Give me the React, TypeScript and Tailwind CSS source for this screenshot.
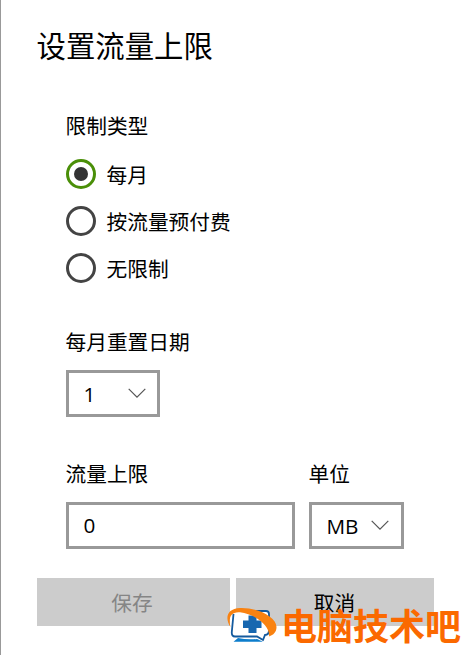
import { useState } from 'react';
import clsx from 'clsx';

const LIMIT_TYPES = ['每月', '按流量预付费', '无限制'];

function Chevron() {
    return (
        <svg width="18" height="11" viewBox="0 0 18 11" fill="none" stroke="#555" strokeWidth="1.2">
            <path d="M0.7 0.8L9 9.2L17.3 0.8" />
        </svg>
    )
}

interface RadioProps {
    label: string;
    checked: boolean;
    onSelect: () => void;
}

function Radio({ label, checked, onSelect }: RadioProps) {
    return (
        <button
            type="button"
            role="radio"
            aria-checked={checked}
            onClick={onSelect}
            className="flex h-[47px] items-center gap-[11px]"
        >
            <span
                className={clsx(
                    'flex size-[30px] items-center justify-center rounded-full border-[3px]',
                    checked ? 'border-[#4a8f08]' : 'border-[#444]'
                )}
            >
                {checked && <span className="size-[14px] rounded-full bg-[#333]" />}
            </span>
            <span>{label}</span>
        </button>
    )
}

function Watermark() {
    return (
        <div className="absolute top-[606px] left-[225px] flex">
            <svg width="53" height="38" viewBox="0 0 53 38">
                {/* speech-bubble monitor */}
                <path d="M11 5.500H39Q42.500 5.500 42.500 9V24Q42.500 28.500 38 28.500V33.500L31 28.500H9Q5.500 28.500 5.800 25L7.500 9Q8 5.500 11 5.500Z" fill="#fff" />
                <path d="M24 5H40Q43 5 43 8V11M43 24Q43 29 39 29L37 34L31 30.500H9Q5.500 30.500 5.800 26L7.500 8" fill="none" stroke="#145a9e" strokeWidth="1.8" />
                <path d="M22.500 9.500H30.500V14.500H35.500V22H30.500V27H22.500V22H17V14.500H22.500Z" fill="#1767b0" />
                <path d="M12 32Q21 34 31 33L37 35.800H7.500Z" fill="#0d7dcc" />
                {/* orange swoosh */}
                <path d="M4.500 21C-1.500 12 1 2.500 14 2C30 1.300 50 10 50.500 21C50.500 26 47.500 29 43 30.500C44.500 20 29 8 14 6.200C4 5.500 2.500 12 4.500 21Z" fill="#f98211" />
            </svg>
            <span className="pl-[2px] text-[36px] leading-[36px] font-bold whitespace-nowrap text-[#fb6900]">
                电脑技术吧
            </span>
        </div>
    )
}

export default function App() {
    const [limitType, setLimitType] = useState(0);

    return (
        <div className="relative h-[655px] w-[468px] overflow-hidden border-l-[1.5px] border-[#999] bg-white pl-[35.5px] font-['Noto_Sans_CJK_SC',sans-serif] text-[20.700px] leading-[30px] text-black">
            <h1 className="pt-[24px] text-[29.400px] leading-[40px]">设置流量上限</h1>

            <div className="pt-[46px] pl-[29px]">
                <div>限制类型</div>
                <div role="radiogroup" className="mt-[10px] flex flex-col items-start">
                    {LIMIT_TYPES.map((label, i) => (
                        <Radio key={label} label={label} checked={limitType === i} onSelect={() => setLimitType(i)} />
                    ))}
                </div>

                <div className="mt-[35px]">每月重置日期</div>
                <button type="button" className="mt-[14px] flex h-[47px] w-[94px] items-center justify-between border-[3px] border-[#999] pr-[11px] pl-[15px] font-['Open_Sans','Noto_Sans',sans-serif]">
                    1
                    <Chevron />
                </button>

                <div className="mt-[41px] flex gap-[14px]">
                    <div>
                        <div>流量上限</div>
                        <div className="mt-[14px] flex h-[47px] w-[229px] items-center border-[3px] border-[#999] pb-[2px] pl-[15px] font-['Open_Sans','Noto_Sans',sans-serif]">
                            0
                        </div>
                    </div>
                    <div>
                        <div>单位</div>
                        <button type="button" className="mt-[14px] flex h-[47px] w-[95px] items-center justify-between border-[3px] border-[#999] pr-[12px] pl-[15px] font-['Open_Sans','Noto_Sans',sans-serif]">
                            MB
                            <Chevron />
                        </button>
                    </div>
                </div>
            </div>

            <div className="mt-[29px] flex gap-[6px]">
                <button type="button" disabled className="h-[48px] w-[193px] bg-[#ccc] pr-[2px] text-[#858585]">保存</button>
                <button type="button" className="h-[48px] w-[198px] bg-[#ccc]">取消</button>
            </div>

            <Watermark />
        </div>
    )
}
